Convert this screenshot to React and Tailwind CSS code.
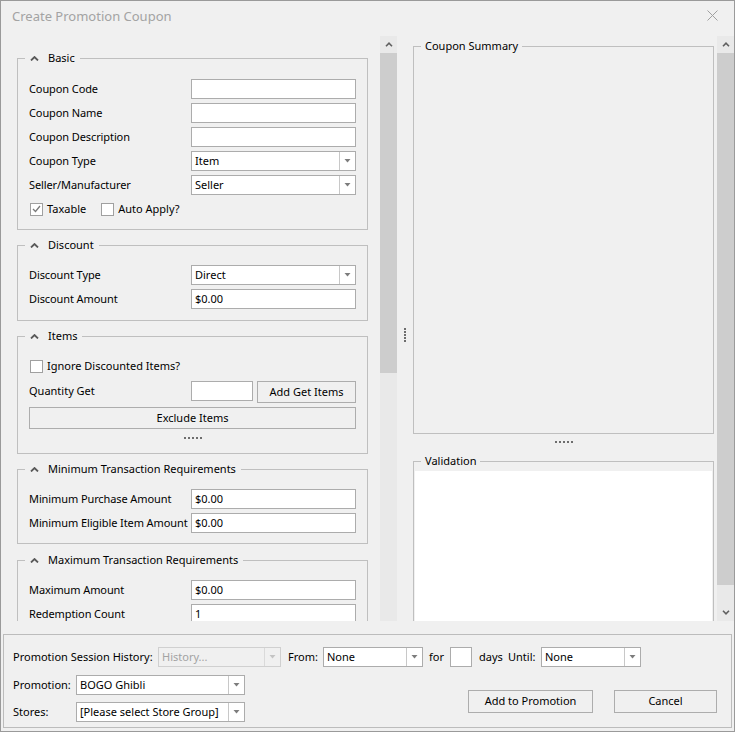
import React from 'react'

const Chevron = () => (
  <svg width="9" height="5" viewBox="0 0 9 5" className="mr-[9px] shrink-0">
    <path d="M1 4.5 L4.5 1 L8 4.5" stroke="#5a5a5a" strokeWidth="1.8" fill="none" />
  </svg>
)

const Group = ({ title, chevron = true, pad = 'px-[5px]', className = '', children }) => (
  <fieldset className={`border border-[#bfbfbf] ${className}`}>
    <legend className={`ml-[7px] ${pad}`}>
      <span className="flex items-center h-[14px] leading-[14px] whitespace-nowrap">
        {chevron && <Chevron />}
        {title}
      </span>
    </legend>
    {children}
  </fieldset>
)

const TextBox = ({ value = '', className = 'w-[165px]' }) => (
  <div className={`h-[20px] border border-[#acacac] bg-white pl-[3px] flex items-center whitespace-nowrap ${className}`}>
    {value}
  </div>
)

const Combo = ({ value, className = 'w-[165px]', disabled }) => (
  <div
    className={`h-[20px] border flex ${
      disabled ? 'border-[#d0d0d0] bg-[#f0f0f0] text-[#a3a3a3]' : 'border-[#acacac] bg-white'
    } ${className}`}
  >
    <span className="flex-1 pl-[3px] flex items-center whitespace-nowrap overflow-hidden">{value}</span>
    <span
      className={`w-[16px] border-l flex items-center justify-center ${
        disabled ? 'border-[#dadada]' : 'border-[#c8c8c8]'
      }`}
    >
      <svg width="7" height="4" viewBox="0 0 7 4">
        <polygon points="0.5,0 6.5,0 3.5,3.5" fill={disabled ? '#c4c4c4' : '#7d7d7d'} />
      </svg>
    </span>
  </div>
)

const Row = ({ label, children }) => (
  <div className="flex items-center h-[20px]">
    <span className="w-[162px] shrink-0 whitespace-nowrap tracking-[-0.1px]">{label}</span>
    {children}
  </div>
)

const Check = ({ checked, label }) => (
  <div className="flex items-center whitespace-nowrap">
    <span className="w-[13px] h-[13px] border border-[#a0a0a0] bg-white flex items-center justify-center ml-[1px] mr-[4px]">
      {checked && (
        <svg width="9" height="8" viewBox="0 0 9 8">
          <path d="M1 4 L3.5 6.5 L8 1" stroke="#7a7a7a" strokeWidth="1.3" fill="none" />
        </svg>
      )}
    </span>
    {label}
  </div>
)

const Btn = ({ children, className = '' }) => (
  <button type="button" className={`border border-[#adadad] bg-[#f0f0f0] flex items-center justify-center ${className}`}>
    {children}
  </button>
)

const HDots = () => (
  <div className="flex gap-[2px]">
    {[0, 1, 2, 3, 4].map(i => (
      <span key={i} className="w-[2px] h-[2px] bg-[#6d6d6d]" />
    ))}
  </div>
)

const VDots = () => (
  <div className="flex flex-col gap-[1px]">
    {[0, 1, 2, 3, 4].map(i => (
      <span key={i} className="w-[2px] h-[2px] bg-[#6d6d6d]" />
    ))}
  </div>
)

const ScrollBar = ({ thumb, down }) => (
  <div className="w-[17px] flex flex-col bg-[#e9e9e9]">
    <div className="h-[17px] flex items-center justify-center">
      <svg width="8" height="5" viewBox="0 0 8 5">
        <path d="M1 4.2 L4 1.2 L7 4.2" stroke="#606060" strokeWidth="1.6" fill="none" />
      </svg>
    </div>
    <div className={`bg-[#cdcdcd] ${thumb}`} />
    <div className="flex-1" />
    {down && (
      <div className="h-[17px] flex items-center justify-center">
        <svg width="8" height="5" viewBox="0 0 8 5">
          <path d="M1 0.8 L4 3.8 L7 0.8" stroke="#606060" strokeWidth="1.6" fill="none" />
        </svg>
      </div>
    )}
  </div>
)

export default function App() {
  return (
    <div className="w-[735px] h-[732px] border border-[#9a9a9a] bg-[#f0f0f0] flex flex-col overflow-hidden font-['Noto_Sans',sans-serif] text-[11px] text-black">
      {/* Title bar */}
      <div className="h-[35px] flex items-start justify-between pl-[11px] pr-[16px] pt-[6px]">
        <span className="text-[13px] leading-[18px] text-[#a3a3a3]">Create Promotion Coupon</span>
        <svg className="mt-[3px]" width="11" height="11" viewBox="0 0 11 11">
          <path d="M0.5 0.5 L10.5 10.5 M10.5 0.5 L0.5 10.5" stroke="#a0a0a0" strokeWidth="1" />
        </svg>
      </div>

      {/* Main area */}
      <div className="h-[585px] flex">
        {/* Left form */}
        <div className="w-[379px] overflow-hidden pl-[16px] pt-[15px] flex flex-col gap-[8px]">
          <Group title="Basic" className="w-[351px] shrink-0">
            <div className="px-[11px] pt-[14px] pb-[10px] flex flex-col gap-[4px]">
              <Row label="Coupon Code"><TextBox /></Row>
              <Row label="Coupon Name"><TextBox /></Row>
              <Row label="Coupon Description"><TextBox /></Row>
              <Row label="Coupon Type"><Combo value="Item" /></Row>
              <Row label="Seller/Manufacturer"><Combo value="Seller" /></Row>
              <div className="flex items-center h-[20px] gap-[14px]">
                <Check checked label="Taxable" />
                <Check label="Auto Apply?" />
              </div>
            </div>
          </Group>

          <Group title="Discount" className="w-[351px] shrink-0">
            <div className="px-[11px] pt-[13px] pb-[11px] flex flex-col gap-[4px]">
              <Row label="Discount Type"><Combo value="Direct" /></Row>
              <Row label="Discount Amount"><TextBox value="$0.00" /></Row>
            </div>
          </Group>

          <Group title="Items" className="w-[351px] shrink-0">
            <div className="px-[11px] pt-[13px] pb-[14px] flex flex-col">
              <div className="h-[20px] flex items-center">
                <Check label="Ignore Discounted Items?" />
              </div>
              <div className="mt-[5px] flex items-start">
                <span className="w-[162px] h-[20px] flex items-center">Quantity Get</span>
                <TextBox className="w-[62px]" />
                <Btn className="ml-[4px] w-[99px] h-[22px]">Add Get Items</Btn>
              </div>
              <Btn className="mt-[4px] w-full h-[22px]">Exclude Items</Btn>
              <div className="mt-[8px] flex justify-center">
                <HDots />
              </div>
            </div>
          </Group>

          <Group title="Minimum Transaction Requirements" className="w-[351px] shrink-0">
            <div className="px-[11px] pt-[13px] pb-[10px] flex flex-col gap-[4px]">
              <Row label="Minimum Purchase Amount"><TextBox value="$0.00" /></Row>
              <Row label="Minimum Eligible Item Amount"><TextBox value="$0.00" /></Row>
            </div>
          </Group>

          <Group title="Maximum Transaction Requirements" className="w-[351px] shrink-0 mt-[1px]">
            <div className="px-[11px] pt-[13px] pb-[10px] flex flex-col gap-[4px]">
              <Row label="Maximum Amount"><TextBox value="$0.00" /></Row>
              <Row label="Redemption Count"><TextBox value="1" /></Row>
            </div>
          </Group>
        </div>

        <ScrollBar thumb="h-[320px]" />

        {/* Splitter */}
        <div className="w-[16px] flex justify-center pt-[292px]">
          <VDots />
        </div>

        {/* Right pane */}
        <div className="w-[301px] overflow-hidden pt-[3px] flex flex-col">
          <Group title="Coupon Summary" chevron={false} pad="px-[4px]" className="h-[395px] shrink-0" />
          <div className="h-[20px] shrink-0 pt-[7px] flex justify-center">
            <HDots />
          </div>
          <Group title="Validation" chevron={false} pad="px-[4px]" className="shrink-0">
            <div className="mx-[1px] mt-[3px] h-[200px] bg-white" />
          </Group>
        </div>

        <div className="w-[3px]" />
        <ScrollBar thumb="h-[532px]" down />
      </div>

      {/* Bottom panel */}
      <div className="mt-[13px] ml-[2px] w-[729px] h-[94px] border border-[#bcbcbc] pt-[12px] pl-[9px] pr-[14px]">
        <div className="flex items-center h-[20px] whitespace-nowrap">
          <span className="w-[145px]">Promotion Session History:</span>
          <Combo value="History..." disabled className="w-[123px]" />
          <span className="ml-[7px] w-[35px]">From:</span>
          <Combo value="None" className="w-[100px]" />
          <span className="ml-[6px] w-[21px]">for</span>
          <TextBox className="w-[22px]" />
          <span className="ml-[7px] w-[29px]">days</span>
          <span className="w-[33px]">Until:</span>
          <Combo value="None" className="w-[100px]" />
        </div>
        <div className="flex mt-[8px]">
          <div className="flex flex-col gap-[7px]">
            <div className="flex items-center h-[20px]">
              <span className="w-[63px]">Promotion:</span>
              <Combo value="BOGO Ghibli" className="w-[169px]" />
            </div>
            <div className="flex items-center h-[20px]">
              <span className="w-[63px]">Stores:</span>
              <Combo value="[Please select Store Group]" className="w-[169px]" />
            </div>
          </div>
          <div className="ml-auto mt-[15px] flex gap-[21px]">
            <Btn className="w-[125px] h-[23px]">Add to Promotion</Btn>
            <Btn className="w-[103px] h-[23px]">Cancel</Btn>
          </div>
        </div>
      </div>
    </div>
  )
}
